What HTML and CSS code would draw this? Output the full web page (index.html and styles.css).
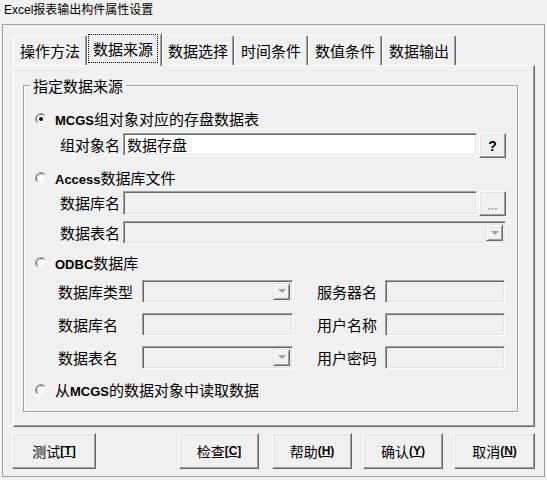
FILE: index.html
```html
<!DOCTYPE html>
<html>
<head>
<meta charset="utf-8">
<title>Excel报表输出构件属性设置</title>
<link rel="stylesheet" href="styles.css">
</head>
<body>
<div class="titlebar">Excel报表输出构件属性设置</div>
<div class="frame">
  <div class="tabs">
    <div class="tab w74">操作方法</div>
    <div class="tab active"><span class="focus">数据来源</span></div>
    <div class="tab w72">数据选择</div>
    <div class="tab w74">时间条件</div>
    <div class="tab w74">数值条件</div>
    <div class="tab w74">数据输出</div>
  </div>
  <div class="panel">
    <fieldset class="group">
      <legend>指定数据来源</legend>

      <div class="radio-row r1">
        <svg class="radio" width="12" height="12" viewBox="0 0 12 12"><circle cx="6" cy="6" r="5" fill="#fff"/><path d="M2.1 9.9A5.5 5.5 0 0 1 9.9 2.1" stroke="#a0a0a0" fill="none"/><path d="M9.9 2.1A5.5 5.5 0 0 1 2.1 9.9" stroke="#fff" fill="none"/><path d="M2.8 9.2A4.5 4.5 0 0 1 9.2 2.8" stroke="#696969" fill="none"/><path d="M9.2 2.8A4.5 4.5 0 0 1 2.8 9.2" stroke="#e3e3e3" fill="none"/><circle cx="6" cy="6" r="2" fill="#000"/></svg>
        <span class="rtext"><b>MCGS</b>组对象对应的存盘数据表</span>
      </div>
      <div class="field-row f1">
        <span class="lbl">组对象名</span>
        <div class="input white wide">数据存盘</div>
        <div class="btn sq">?</div>
      </div>

      <div class="radio-row r2">
        <svg class="radio" width="12" height="12" viewBox="0 0 12 12"><circle cx="6" cy="6" r="5" fill="#fff"/><path d="M2.1 9.9A5.5 5.5 0 0 1 9.9 2.1" stroke="#a0a0a0" fill="none"/><path d="M9.9 2.1A5.5 5.5 0 0 1 2.1 9.9" stroke="#fff" fill="none"/><path d="M2.8 9.2A4.5 4.5 0 0 1 9.2 2.8" stroke="#696969" fill="none"/><path d="M9.2 2.8A4.5 4.5 0 0 1 2.8 9.2" stroke="#e3e3e3" fill="none"/></svg>
        <span class="rtext"><b>Access</b>数据库文件</span>
      </div>
      <div class="field-row f2">
        <span class="lbl">数据库名</span>
        <div class="input wide tall"></div>
        <div class="btn sq dots">...</div>
      </div>
      <div class="field-row f3">
        <span class="lbl">数据表名</span>
        <div class="input select full"><span class="dd"><i class="arrow"></i></span></div>
      </div>

      <div class="radio-row r3">
        <svg class="radio" width="12" height="12" viewBox="0 0 12 12"><circle cx="6" cy="6" r="5" fill="#fff"/><path d="M2.1 9.9A5.5 5.5 0 0 1 9.9 2.1" stroke="#a0a0a0" fill="none"/><path d="M9.9 2.1A5.5 5.5 0 0 1 2.1 9.9" stroke="#fff" fill="none"/><path d="M2.8 9.2A4.5 4.5 0 0 1 9.2 2.8" stroke="#696969" fill="none"/><path d="M9.2 2.8A4.5 4.5 0 0 1 2.8 9.2" stroke="#e3e3e3" fill="none"/></svg>
        <span class="rtext"><b>ODBC</b>数据库</span>
      </div>
      <div class="odbc">
        <span class="lbl2">数据库类型</span>
        <div class="input select"><span class="dd"><i class="arrow"></i></span></div>
        <span class="lbl3">服务器名</span>
        <div class="input"></div>

        <span class="lbl2">数据库名</span>
        <div class="input"></div>
        <span class="lbl3">用户名称</span>
        <div class="input"></div>

        <span class="lbl2">数据表名</span>
        <div class="input select"><span class="dd"><i class="arrow"></i></span></div>
        <span class="lbl3">用户密码</span>
        <div class="input"></div>
      </div>

      <div class="radio-row r4">
        <svg class="radio" width="12" height="12" viewBox="0 0 12 12"><circle cx="6" cy="6" r="5" fill="#fff"/><path d="M2.1 9.9A5.5 5.5 0 0 1 9.9 2.1" stroke="#a0a0a0" fill="none"/><path d="M9.9 2.1A5.5 5.5 0 0 1 2.1 9.9" stroke="#fff" fill="none"/><path d="M2.8 9.2A4.5 4.5 0 0 1 9.2 2.8" stroke="#696969" fill="none"/><path d="M9.2 2.8A4.5 4.5 0 0 1 2.8 9.2" stroke="#e3e3e3" fill="none"/></svg>
        <span class="rtext">从<b>MCGS</b>的数据对象中读取数据</span>
      </div>
    </fieldset>
  </div>
  <div class="actions">
    <div class="btn act b-test">测试<b>[<u>T</u>]</b></div>
    <div class="btn act b-check">检查<b>[<u>C</u>]</b></div>
    <div class="btn act b-help">帮助<b>(<u>H</u>)</b></div>
    <div class="btn act b-ok">确认<b>(<u>Y</u>)</b></div>
    <div class="btn act b-cancel">取消<b>(<u>N</u>)</b></div>
  </div>
</div>
</body>
</html>
```
FILE: styles.css
```css
* { box-sizing: border-box; }
html, body { margin: 0; padding: 0; }
body {
  width: 547px;
  height: 480px;
  overflow: hidden;
  background: #f0f0f0;
  color: #000;
  font-family: "Noto Sans CJK SC", "Liberation Sans", sans-serif;
  font-size: 15px;
}
b { font-family: "Liberation Sans", "Noto Sans CJK SC", sans-serif; font-weight: bold; }

.titlebar {
  height: 24px;
  padding-left: 4px;
  font-family: "Liberation Sans", "Noto Sans CJK SC", sans-serif;
  font-size: 12px;
  line-height: 21px;
}

.frame {
  margin: 0 2px;
  height: 453px;
  border: 1px solid #a0a0a0;
  padding: 8px 0 0 10px;
}

/* tabs */
.tabs {
  display: flex;
  align-items: flex-end;
  height: 33px;
}
.tab {
  height: 30px;
  margin-bottom: 1px;
  border-top: 1px solid #fff;
  border-left: 1px solid #fff;
  border-right: 1px solid #696969;
  box-shadow: inset -1px 0 #a0a0a0;
  border-top-left-radius: 2px;
  border-top-right-radius: 2px;
  display: flex;
  align-items: center;
  justify-content: center;
  line-height: 17px;
}
.w74 { width: 74px; }
.w72 { width: 72px; }
.tab.active {
  width: 75px;
  height: 33px;
  margin-bottom: 0;
  position: relative;
  z-index: 1;
  background: #f0f0f0;
  align-items: flex-start;
  justify-content: flex-start;
}
.focus {
  width: 70px;
  height: 29px;
  border: 1px dotted #000;
  display: flex;
  align-items: center;
  justify-content: center;
}

/* panel */
.panel {
  width: 522px;
  height: 362px;
  margin-top: -1px;
  border-top: 1px solid #fff;
  border-left: 1px solid #fff;
  border-right: 1px solid #696969;
  border-bottom: 1px solid #696969;
  box-shadow: inset -1px -1px #a0a0a0;
  padding: 11px 0 0 9px;
}

.group {
  width: 495px;
  margin: 0;
  padding: 0 0 11px 0;
  border: 1px solid #a0a0a0;
  box-shadow: inset 1px 1px #fff, 1px 1px #fff;
  min-inline-size: 0;
}
.group legend {
  margin-left: 6px;
  padding: 0 3px;
  line-height: 17px;
  background: #f0f0f0;
}

.radio-row {
  height: 20px;
  display: flex;
  align-items: center;
  padding-left: 11px;
}
.radio { flex: none; display: block; }
.rtext { margin-left: 8px; line-height: 17px; white-space: nowrap; }
.rtext b { font-size: 13px; }
.r1 { margin-top: 15px; }
.r2 { margin-top: 10px; }
.r3 { margin-top: 9px; }
.r4 { margin-top: 11px; }

.field-row {
  display: flex;
  align-items: flex-start;
  padding-left: 36px;
}
.f1 { margin-top: 4px; }
.f2 { margin-top: 3px; }
.f3 { margin-top: 5px; }
.lbl {
  width: 63px;
  flex: none;
  line-height: 23px;
}

.input {
  flex: none;
  height: 23px;
  border: 1px solid;
  border-color: #a0a0a0 #fff #fff #a0a0a0;
  box-shadow: inset 1px 1px #696969, inset -1px -1px #e3e3e3;
  background: #f0f0f0;
  padding-left: 3px;
  line-height: 21px;
}
.input.white { background: #fff; }
.wide { width: 354px; margin-right: 2px; }
.tall { height: 24px; }
.full { width: 383px; }

.select {
  display: flex;
  justify-content: flex-end;
  padding: 2px;
}
.dd {
  width: 17px;
  height: 100%;
  border: 1px solid;
  border-color: #e3e3e3 #696969 #696969 #e3e3e3;
  box-shadow: inset 1px 1px #fff, inset -1px -1px #a0a0a0;
  display: flex;
  align-items: center;
  justify-content: center;
}
.arrow {
  width: 0;
  height: 0;
  border-left: 4px solid transparent;
  border-right: 4px solid transparent;
  border-top: 4px solid #a0a0a0;
}

.btn {
  border: 1px solid;
  border-color: #fff #696969 #696969 #fff;
  box-shadow: inset -1px -1px #a0a0a0, inset 1px 1px #e3e3e3;
  background: #f0f0f0;
  display: flex;
  align-items: center;
  justify-content: center;
}
.sq {
  width: 27px;
  height: 25px;
  flex: none;
  font-family: "Liberation Sans", sans-serif;
  font-weight: bold;
  font-size: 14px;
}
.dots {
  color: #a0a0a0;
  text-shadow: 1px 1px #fff;
  font-size: 12px;
  padding-top: 4px;
}

.odbc {
  display: grid;
  grid-template-columns: 84px 151px 92px 120px;
  grid-template-rows: 24px 24px 24px;
  row-gap: 9px;
  margin-top: 6px;
  padding-left: 34px;
  align-items: center;
}
.odbc .input { height: 23px; }
.lbl2 { line-height: 23px; }
.lbl3 { line-height: 23px; text-align: right; padding-right: 8px; }

/* bottom buttons */
.actions {
  display: flex;
  margin-top: 6px;
  margin-left: -1px;
}
.act {
  height: 36px;
  width: 80px;
  font-size: 14px;
}
.act b { font-size: 12px; }
.b-test { width: 84px; }
.b-check { margin-left: 83px; }
.b-help { margin-left: 13px; }
.b-ok { margin-left: 11px; }
.b-cancel { margin-left: 11px; width: 81px; }
```
